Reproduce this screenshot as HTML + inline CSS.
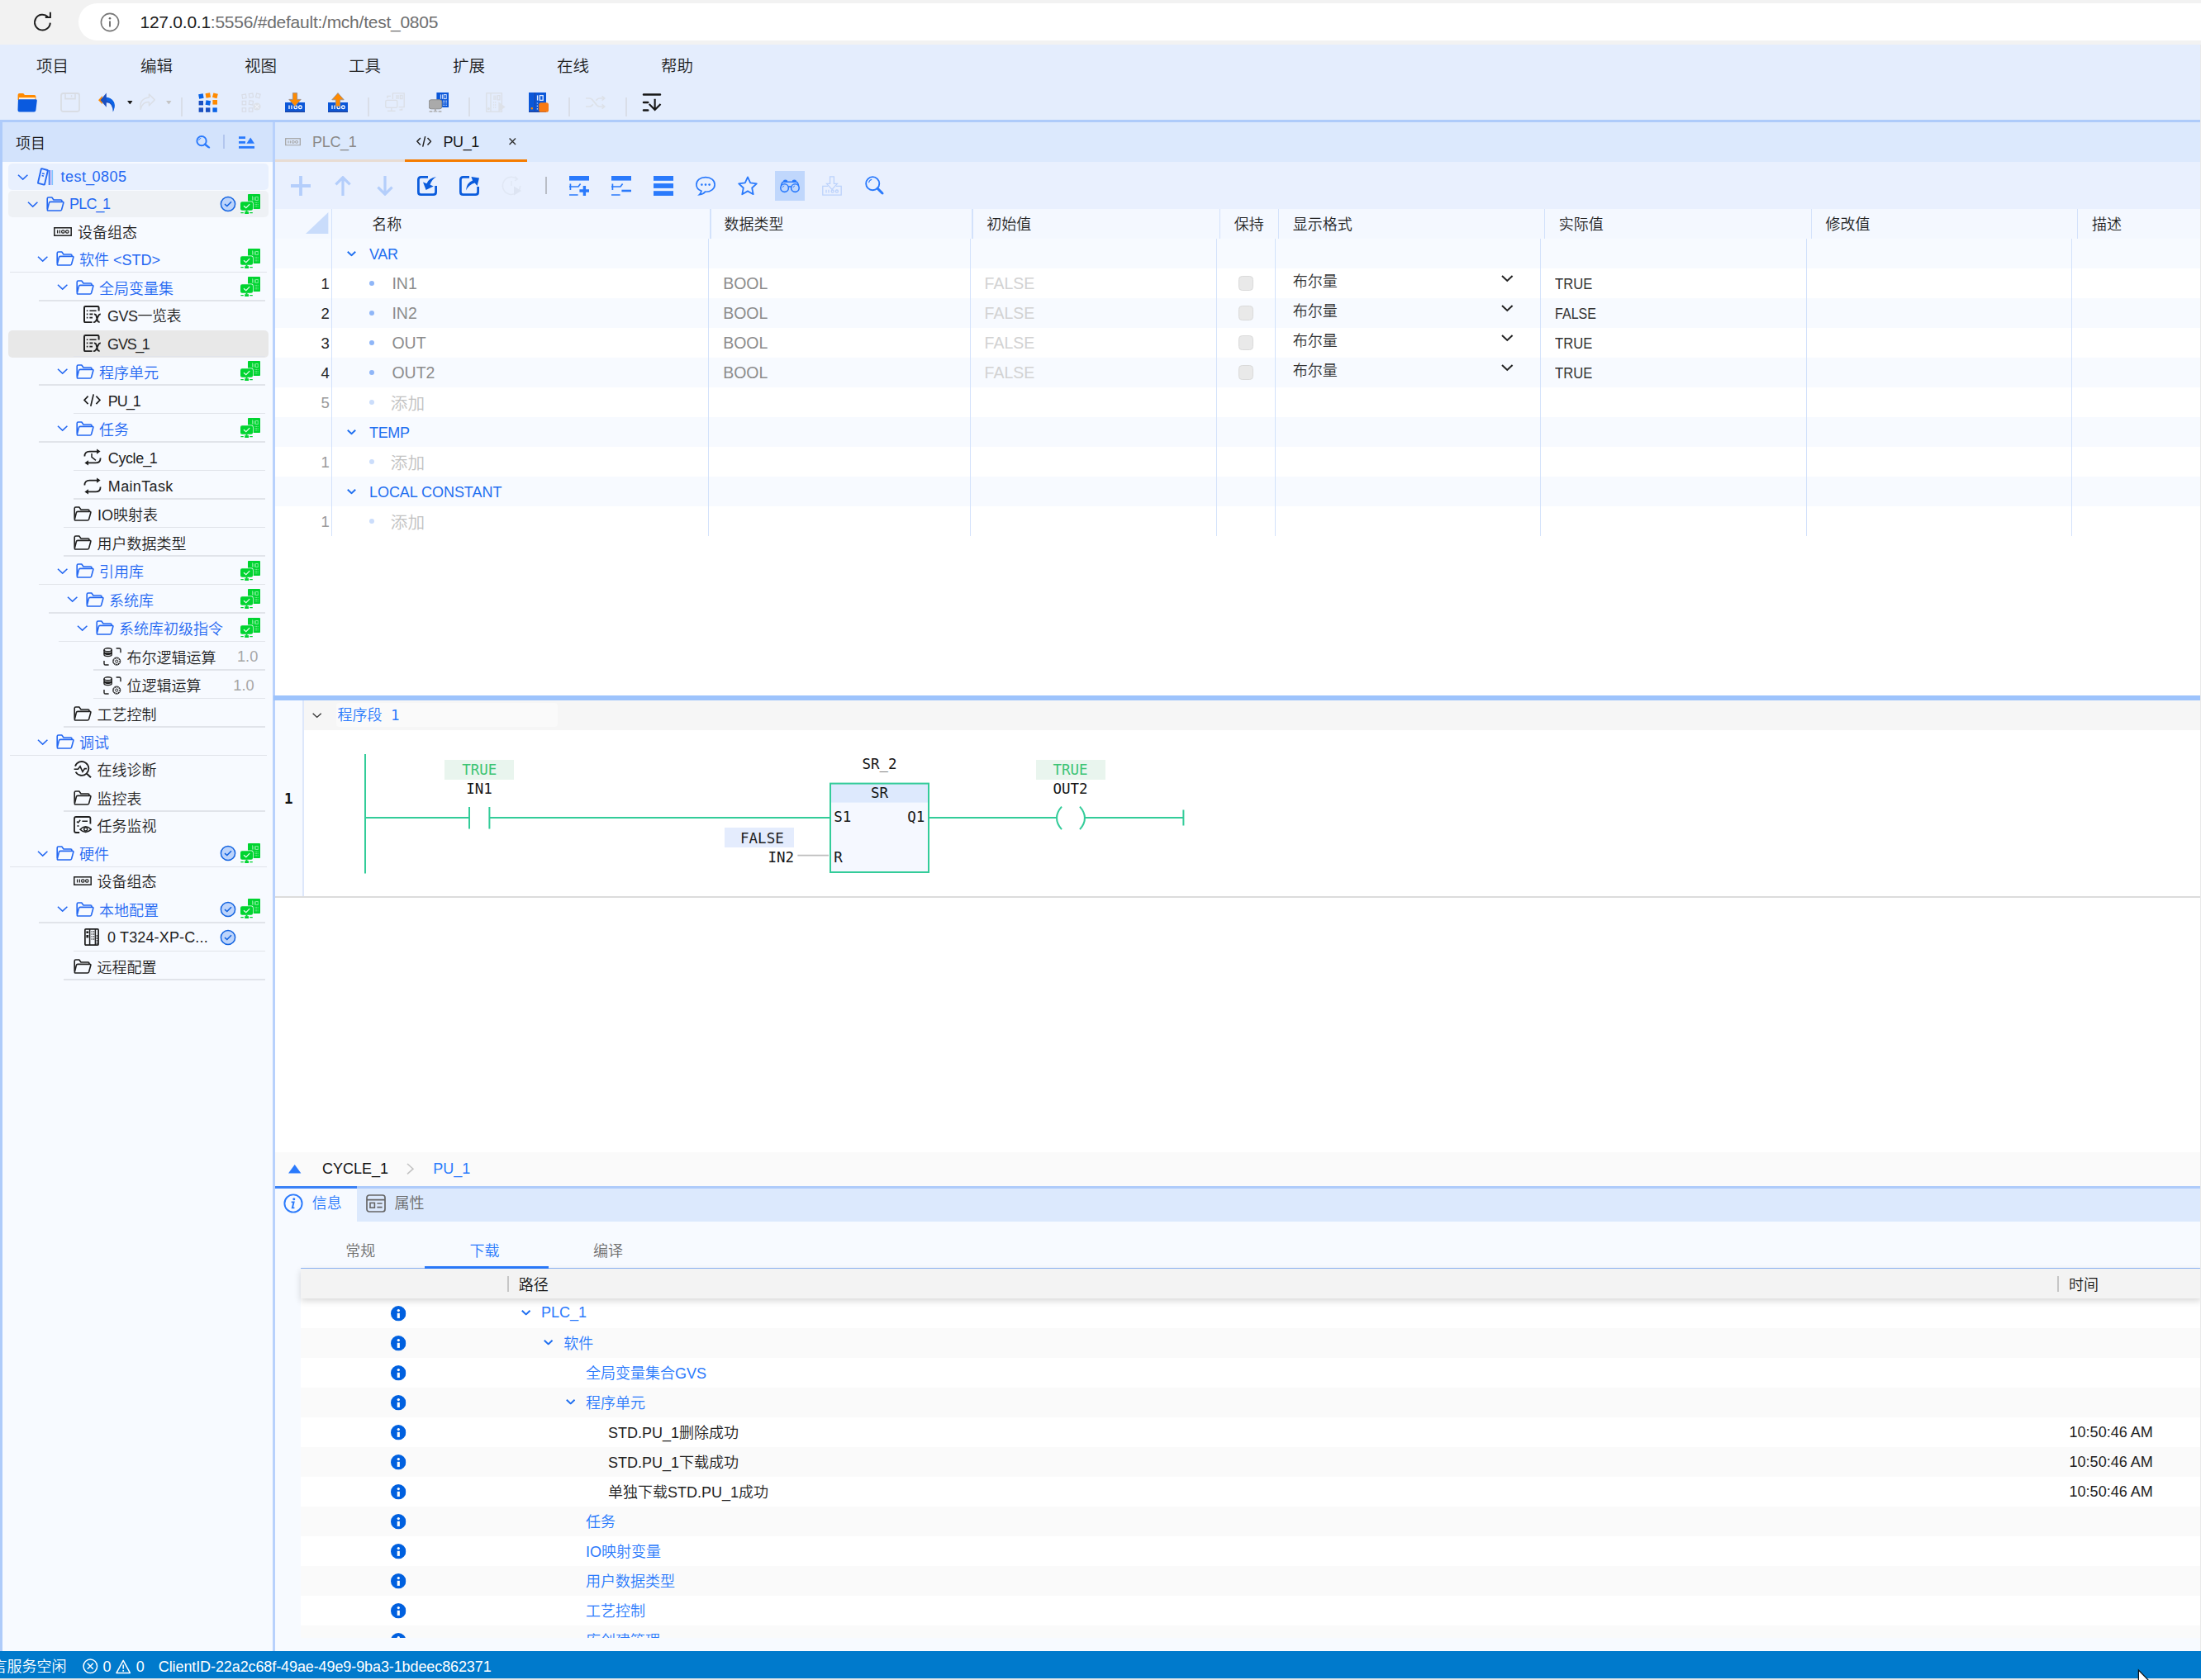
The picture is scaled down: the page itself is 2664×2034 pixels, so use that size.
<!DOCTYPE html>
<html lang="zh-CN"><head><meta charset="utf-8"><title>test_0805</title><style>
*{box-sizing:border-box;margin:0;padding:0}
html,body{width:2664px;height:2034px;overflow:hidden;background:#fff}
body{position:relative;font-family:"Liberation Sans","Noto Sans CJK SC",sans-serif;font-size:18px;font-weight:350;color:#222;-webkit-font-smoothing:antialiased}
.a{position:absolute}
.t{position:absolute;white-space:nowrap;line-height:1}
.mono{font-family:"DejaVu Sans Mono","Liberation Mono",monospace}
.blue{color:#2468f2}
svg{position:absolute;overflow:visible}
.u{letter-spacing:-2.4px;margin-left:-0.6px}
</style></head><body>
<svg width="0" height="0" style="position:absolute">
<defs>
<symbol id="chev" viewBox="0 0 14 8"><path d="M0.8 0.8 L7 6.6 L13.2 0.8" fill="none" stroke="currentColor" stroke-width="1.7"/></symbol>
<symbol id="chevb" viewBox="0 0 14 8"><path d="M1 1 L7 6.6 L13 1" fill="none" stroke="currentColor" stroke-width="2.5"/></symbol>
<symbol id="folder" viewBox="0 0 22 18"><path d="M1.2 15.2 V2.6 Q1.2 1 2.8 1 H6.8 L9 4 H17.6 Q19 4 19 5.6 V6.4 M5 6.4 H19.8 Q21.2 6.4 20.8 7.8 L18.6 15.8 Q18.2 17 17 17 H2.6 Q1 17 1.4 15.6 L3.4 7.6 Q3.7 6.4 5 6.4 Z" fill="none" stroke="currentColor" stroke-width="1.6" stroke-linejoin="round"/></symbol>
<symbol id="proj" viewBox="0 0 20 22"><path d="M5.6 1.2 L12.4 3 Q13 3.2 12.8 3.9 L9 20.2 Q8.8 20.8 8.1 20.6 L1.4 18.8 Q0.8 18.6 1 18 L4.8 1.7 Q5 1.1 5.6 1.2 Z" fill="none" stroke="currentColor" stroke-width="1.9"/><path d="M6 7 L8.8 7.6 M5.6 9.6 L8 10.2" stroke="currentColor" stroke-width="1.5"/><path d="M14.6 3 V21" stroke="currentColor" stroke-width="1.6"/><path d="M16.8 3 V21" stroke="#b9a8f5" stroke-width="1.3"/><path d="M18.4 3 V21" stroke="#7cc4ff" stroke-width="1.4"/></symbol>
<symbol id="dev" viewBox="0 0 22 11"><rect x="0.8" y="0.8" width="20.4" height="9.4" fill="none" stroke="currentColor" stroke-width="1.5"/><path d="M4.6 3.6 V7.4 M7.4 3.6 V7.4" stroke="currentColor" stroke-width="1.3"/><rect x="9.6" y="3.9" width="3.4" height="3.2" rx="1.4" fill="none" stroke="currentColor" stroke-width="1.2"/><rect x="14.6" y="3.9" width="3.4" height="3.2" rx="1.4" fill="none" stroke="currentColor" stroke-width="1.2"/></symbol>
<symbol id="gvs" viewBox="0 0 22 21"><path d="M18.6 6.4 V2.4 Q18.6 1 17.2 1 H2.4 Q1 1 1 2.4 V18.8 Q1 20.2 2.4 20.2 H10.6" fill="none" stroke="currentColor" stroke-width="2"/><path d="M3.8 6.2 H5.4 M7.4 6.2 H15.6 M3.8 10.4 H5.4 M7.4 10.4 H11.4 M3.8 14.6 H5.4 M7.4 14.6 H11" stroke="currentColor" stroke-width="1.6"/><path d="M13 10.6 Q15 10.2 15.6 12.4 L17 18 Q17.6 20.2 19.6 19.6 M20.8 10.6 Q19 10.2 18 12.6 L15.2 18.4 Q14.2 20.4 12.2 19.8" fill="none" stroke="currentColor" stroke-width="1.9"/></symbol>
<symbol id="code" viewBox="0 0 21 15"><path d="M5.6 2.6 L1 7.4 L5.6 12.2 M15.4 2.6 L20 7.4 L15.4 12.2 M12.2 0.4 L8.8 14.8" fill="none" stroke="currentColor" stroke-width="1.7"/></symbol>
<symbol id="loop" viewBox="0 0 22 21"><path d="M1.4 9.6 Q1.4 3.6 7.4 3.6 H19" fill="none" stroke="currentColor" stroke-width="1.8"/><path d="M16 0.4 L20.6 3.6 L16 6.8 Z" fill="currentColor"/><path d="M20.6 11.4 Q20.6 17.4 14.6 17.4 H3" fill="none" stroke="currentColor" stroke-width="1.8"/><path d="M6 14.2 L1.4 17.4 L6 20.6 Z" fill="currentColor"/></symbol>
<symbol id="cycle" viewBox="0 0 22 21"><path d="M1.4 9.6 Q1.4 3.6 7.4 3.6 H19" fill="none" stroke="currentColor" stroke-width="1.8"/><path d="M16 0.4 L20.6 3.6 L16 6.8 Z" fill="currentColor"/><path d="M20.6 11.4 Q20.6 17.4 14.6 17.4 H3" fill="none" stroke="currentColor" stroke-width="1.8"/><path d="M6 14.2 L1.4 17.4 L6 20.6 Z" fill="currentColor"/><path d="M10 6 V10.4 L15 14.4" fill="none" stroke="currentColor" stroke-width="1.5"/></symbol>
<symbol id="lib" viewBox="0 0 22 22"><ellipse cx="5.6" cy="2.8" rx="4.6" ry="2" fill="none" stroke="currentColor" stroke-width="1.4"/><path d="M1 2.8 V8.6 Q1 10.6 5.6 10.6 Q10.2 10.6 10.2 8.6 V2.8 M1 5 Q1 7 5.6 7 Q10.2 7 10.2 5" fill="none" stroke="currentColor" stroke-width="1.4"/><path d="M1 6.6 Q5.6 9.6 10.2 6.6" fill="none" stroke="currentColor" stroke-width="2.2"/><path d="M15.6 1 H19.4 Q21 1 21 2.6 V6.2 M1 16 V19.4 Q1 21 2.6 21 H6.6" fill="none" stroke="currentColor" stroke-width="1.4"/><circle cx="16.2" cy="16.6" r="3.8" fill="none" stroke="currentColor" stroke-width="1.1" stroke-dasharray="1.6 0.9"/><circle cx="16.2" cy="16.6" r="4.6" fill="none" stroke="currentColor" stroke-width="0.9"/><circle cx="16.2" cy="16.6" r="1.6" fill="none" stroke="currentColor" stroke-width="1"/></symbol>
<symbol id="diag" viewBox="0 0 22 21"><path d="M2 6.6 A8.4 8.4 0 1 1 2.6 13.6" fill="none" stroke="currentColor" stroke-width="1.8"/><path d="M0.6 10.2 H5.4 L8 6.8 L11 13.4 L13.4 9.6 H16" fill="none" stroke="currentColor" stroke-width="1.6"/><path d="M15.8 15.4 L21 20.2" stroke="currentColor" stroke-width="2"/></symbol>
<symbol id="taskmon" viewBox="0 0 22 21"><path d="M7.2 20 H3 Q1 20 1 18 V3 Q1 1 3 1 H18.4 Q20.4 1 20.4 3 V9.6" fill="none" stroke="currentColor" stroke-width="1.8"/><path d="M4 6.6 L5.6 8 L8.2 4.8 M10.4 6.2 H17 M4.4 12 H6.6" fill="none" stroke="currentColor" stroke-width="1.5"/><path d="M8 16.2 Q14.6 9.4 21.4 16.2 Q14.6 22.6 8 16.2 Z" fill="none" stroke="currentColor" stroke-width="1.6"/><circle cx="14.7" cy="16" r="2" fill="none" stroke="currentColor" stroke-width="1.5"/></symbol>
<symbol id="module" viewBox="0 0 18 21"><rect x="0.9" y="0.9" width="16.2" height="19.2" rx="1" fill="none" stroke="currentColor" stroke-width="1.7"/><path d="M6.6 1 V20 M13.4 1 V20" stroke="currentColor" stroke-width="1.5"/><rect x="2.4" y="3.4" width="2.8" height="2.6" fill="currentColor"/><rect x="2.4" y="8" width="2.8" height="3.4" fill="currentColor"/><path d="M8.6 4 H9.8 M11 4 H12.2 M8.6 7 H9.8 M11 7 H12.2 M8.6 10 H9.8 M11 10 H12.2 M8.6 13 H9.8 M11 13 H12.2 M14.6 9 H16 M14.6 12 H16 M14.6 15 H16 M14.6 18 H16" stroke="currentColor" stroke-width="1.6"/></symbol>
<symbol id="okc" viewBox="0 0 20 20"><circle cx="10" cy="10" r="8.6" fill="#bdd4fb" stroke="#1162e0" stroke-width="1.5"/><path d="M6 10.2 L8.8 12.5 L14 7.2" fill="none" stroke="#1162e0" stroke-width="1.6"/></symbol>
<symbol id="gplc" viewBox="0 0 24 24"><rect x="9" y="0" width="15" height="18" rx="0.8" fill="#00d430"/><path d="M14.6 2.4 V7.6 M16.6 3.4 V7.6" stroke="#9af0ad" stroke-width="0.9"/><rect x="18.6" y="3.4" width="2.6" height="4.2" fill="none" stroke="#9af0ad" stroke-width="0.8"/><path d="M17.6 10.4 H21.6 M17.6 12.6 H21.6 M17.6 14.8 H21.6" stroke="#9af0ad" stroke-width="0.9" stroke-dasharray="1 0.6"/><rect x="-0.7" y="8.5" width="16.4" height="12" rx="2.4" fill="#f2f4f8"/><rect x="0" y="9.2" width="15" height="10.6" rx="2" fill="#00d430"/><path d="M4 14.2 L6.8 16.6 L11.2 12.2" fill="none" stroke="#e8fff0" stroke-width="1.2"/><rect x="6.5" y="19.6" width="2" height="2" fill="#00d430"/><rect x="5.2" y="21.2" width="4.8" height="2.8" fill="#00d430"/><path d="M0.4 22.6 H3.8 M11.2 22.6 H14.8" stroke="#00d430" stroke-width="1.2"/></symbol>

<symbol id="tbfolder" viewBox="0 0 24 24"><path d="M0.6 3 Q0.6 1 2.6 1 H6.4 Q7.6 1 8.2 2 L8.8 3 H20.6 Q22.4 3 22.4 4.8 V9 H0.6 Z" fill="#ff8a00"/><path d="M2 6.2 H21.6 V10 H2 Z" fill="#fff6e8"/><path d="M2.2 8.2 H22.4 Q24 8.2 23.8 9.8 L22.4 21.4 Q22.2 23.4 20.2 23.4 H2.6 Q0.4 23.4 0.5 21.2 L0.9 9.6 Q1 8.2 2.2 8.2 Z" fill="#0a5adf"/></symbol>
<symbol id="tbsave" viewBox="0 0 24 24"><rect x="1" y="1" width="22" height="22" rx="2.4" fill="none" stroke="#d9dde4" stroke-width="1.8"/><path d="M6 1 V7.6 H18 V1" fill="none" stroke="#d9dde4" stroke-width="1.6"/><path d="M13.6 3.2 V5.4" stroke="#d9dde4" stroke-width="1.4"/></symbol>
<symbol id="tbundo" viewBox="0 0 24 24"><path d="M0 9 L5 3.6 V14.4 Z" fill="#ff8a00"/><path d="M10.2 0 L2.6 9 L10.2 18 V12.4 Q17.6 11.6 18.6 24 Q25 8.6 10.2 5.6 Z" fill="#1a4fc0"/><path d="M10.2 5.6 Q25 8.6 18.6 24 Q20 12 10.2 9.4 Z" fill="#0a63e6"/></symbol>
<symbol id="tbredo" viewBox="0 0 24 24"><path d="M13.6 1 L21 8.6 L13.6 16.2 V11.6 Q5 11 2.4 21 Q0 7 13.6 5.4 Z" fill="none" stroke="#dbdfe6" stroke-width="1.6" stroke-linejoin="round"/></symbol>
<symbol id="caret" viewBox="0 0 7 5"><path d="M0 0 H7 L3.5 5 Z" fill="currentColor"/></symbol>
<symbol id="tbgrid" viewBox="0 0 24 24"><rect x="0.6" y="1.8" width="5.6" height="5.6" fill="#0a63e6" transform="rotate(-10 3.4 4.6)"/><rect x="9" y="0.8" width="5.6" height="5.6" fill="#ff8a00" transform="rotate(-10 11.8 3.6)"/><rect x="17.6" y="1" width="5.6" height="5.6" fill="#ff8a00" transform="rotate(14 20.4 3.8)"/><rect x="0.6" y="10" width="5.4" height="5.4" fill="#1a4fc0"/><rect x="9" y="9.6" width="5.6" height="5.6" fill="#0a63e6" transform="rotate(10 11.8 12.4)"/><rect x="17.4" y="9" width="5.6" height="5.6" fill="#ff8a00"/><rect x="0.6" y="18.4" width="5.4" height="5.4" fill="#1a4fc0"/><rect x="9" y="18.4" width="5.4" height="5.4" fill="#1a4fc0"/><rect x="17.4" y="18.4" width="5.4" height="5.4" fill="#0a63e6"/></symbol>
<symbol id="tbgridd" viewBox="0 0 24 24"><g fill="none" stroke="#d9dde6" stroke-width="1.2"><rect x="1.2" y="2.4" width="4.6" height="4.6" transform="rotate(-10 3.4 4.6)"/><rect x="9.6" y="1.4" width="4.6" height="4.6" transform="rotate(-10 11.8 3.6)"/><rect x="18" y="1.6" width="4.6" height="4.6" transform="rotate(14 20.4 3.8)"/><rect x="1.2" y="10.4" width="4.4" height="4.4"/><rect x="9.6" y="10" width="4.6" height="4.6" transform="rotate(10 11.8 12.4)"/><rect x="1.2" y="18.8" width="4.4" height="4.4"/><rect x="9.4" y="18.8" width="4.4" height="4.4"/></g><circle cx="19" cy="17" r="4.6" fill="#dde1e8"/><path d="M16.6 14.6 L21.4 19.4 M21.4 14.6 L16.6 19.4" stroke="#eef2fa" stroke-width="1.2"/></symbol>
<symbol id="tbbox" viewBox="0 0 24 12"><rect x="0" y="0" width="24" height="12" fill="#0b57d8"/><rect x="0" y="10.4" width="24" height="1.6" fill="#1d47a8"/><path d="M5 3.6 V8 M8 3.6 V8" stroke="#fff" stroke-width="1.3"/><rect x="11" y="4" width="3.6" height="3.6" rx="1.6" fill="none" stroke="#fff" stroke-width="1.3"/><rect x="16.6" y="4" width="3.6" height="3.6" rx="1.6" fill="none" stroke="#fff" stroke-width="1.3"/></symbol>
<symbol id="tbdown" viewBox="0 0 24 24"><use href="#tbbox" x="0" y="12" width="24" height="12"/><path d="M9.4 0.6 H14.6 V8.4 H19.2 L12 16.6 L4.8 8.4 H9.4 Z" fill="#ff8a00" stroke="#9a8f8a" stroke-width="0.9"/></symbol>
<symbol id="tbup" viewBox="0 0 24 24"><use href="#tbbox" x="0" y="12" width="24" height="12"/><path d="M9.4 16.6 H14.6 V8.8 H19.2 L12 0.6 L4.8 8.8 H9.4 Z" fill="#ff8a00" stroke="#9a8f8a" stroke-width="0.9"/></symbol>
<symbol id="tbmond" viewBox="0 0 24 24"><g fill="none" stroke="#dbdfe6" stroke-width="1.3"><path d="M9.4 8 V0.8 H23.2 V17.6 H16.6"/><path d="M14 3 V8 M16 3 V8 M18.4 3.4 H21 V7.6 H18.4 Z"/><rect x="0.8" y="9.4" width="14" height="9" rx="1.6"/><path d="M7.8 18.4 V22 M3 22.4 H12.6"/><path d="M3 7 V4.4 H7"/><path d="M17.4 21 H20.6 V19.4"/></g></symbol>
<symbol id="tbmon" viewBox="0 0 24 24"><rect x="9.4" y="0" width="14.6" height="18" fill="#0b57d8"/><path d="M14.4 2.4 V7.8 M16.4 2.4 V7.8" stroke="#dbe7ff" stroke-width="1"/><rect x="18.2" y="2.6" width="3" height="5" fill="none" stroke="#dbe7ff" stroke-width="1"/><path d="M17 10.4 H22 M17 12.8 H22 M17 15.2 H22" stroke="#dbe7ff" stroke-width="1.1" stroke-dasharray="1.2 0.7"/><rect x="0.2" y="8.8" width="15.6" height="11" rx="2.6" fill="#aaaaaa" stroke="#8c8c8c" stroke-width="1"/><rect x="6.9" y="19.6" width="2" height="2.6" fill="#aaa"/><path d="M0.6 23 H4.4 M5.6 22.8 H10.4 M11.6 23 H15.4" stroke="#aaa" stroke-width="1.3"/></symbol>
<symbol id="tbplayd" viewBox="0 0 24 24"><g fill="none" stroke="#dbdfe6" stroke-width="1.3"><rect x="0.8" y="0.8" width="18.6" height="22.4"/><path d="M6 1 V23 M10 3.4 V9 M12 3.4 V9 M14.4 3.6 H17 V8.8 H14.4 Z"/><circle cx="3.4" cy="19.6" r="0.9"/><path d="M9 12 H13 M9 15 H13 M9 18 H13" stroke-dasharray="1.1 0.8"/></g><path d="M15.4 11.2 L23.6 17.4 L15.4 23.6 Z" fill="#dde1e8"/></symbol>
<symbol id="tbplco" viewBox="0 0 24 24"><rect x="0" y="0" width="21" height="24" fill="#0b57d8"/><rect x="0" y="22.4" width="21" height="1.6" fill="#1d47a8"/><path d="M7.4 0 V24" stroke="#1d47a8" stroke-width="1.2"/><path d="M10.6 3.4 V9.6" stroke="#e6eeff" stroke-width="1.4"/><rect x="13.4" y="3.6" width="3.8" height="5.8" fill="none" stroke="#e6eeff" stroke-width="1.3"/><path d="M10.4 12.4 V21" stroke="#e6eeff" stroke-width="1.2" stroke-dasharray="1.2 2.2"/><rect x="2.6" y="18" width="2.4" height="2.6" rx="0.8" fill="#ff8a00"/><rect x="12.2" y="12.2" width="11.8" height="11.6" rx="2.6" fill="#f97a12"/></symbol>
<symbol id="tbshuf" viewBox="0 0 24 16"><g fill="none" stroke="#dde1e8" stroke-width="1.7"><path d="M0 3 H4.4 Q6.4 3 7.8 4.6 L13.4 11.4 Q14.8 13 16.8 13 H22.6"/><path d="M0 13 H4.4 Q6.4 13 7.8 11.4 L8.8 10.2 M12.4 5.8 L13.4 4.6 Q14.8 3 16.8 3 H22.6"/><path d="M19.6 0.4 L22.8 3 L19.6 5.6 M19.6 10.4 L22.8 13 L19.6 15.6"/></g></symbol>
<symbol id="tbsort" viewBox="0 0 24 24"><g fill="none" stroke="#161616" stroke-width="2.7" stroke-linecap="round"><path d="M1.6 2.6 H22.4 M1.6 12.6 H7 M1.6 22.4 H7"/></g><path d="M15.8 8 V21.4 M8.6 14.6 L15.8 21.8 L23 14.6" fill="none" stroke="#161616" stroke-width="2.2"/></symbol>

<symbol id="t2plus" viewBox="0 0 24 24"><path d="M12 0 V24 M0 12 H24" stroke="#b4cefb" stroke-width="3.8"/></symbol>
<symbol id="t2up" viewBox="0 0 20 24"><path d="M10 2 V24 M1.4 10.4 L10 1.8 L18.6 10.4" fill="none" stroke="#b4cefb" stroke-width="3.2"/></symbol>
<symbol id="t2down" viewBox="0 0 20 24"><path d="M10 0 V22 M1.4 13.6 L10 22.2 L18.6 13.6" fill="none" stroke="#b4cefb" stroke-width="3.2"/></symbol>
<symbol id="t2imp" viewBox="0 0 24 24"><path d="M13 1.4 H4.6 Q1.4 1.4 1.4 4.6 V19.4 Q1.4 22.6 4.6 22.6 H19.4 Q22.6 22.6 22.6 19.4 V12" fill="none" stroke="#0b5cdc" stroke-width="2.8"/><path d="M23 1 Q13.6 3 11.4 9.2 L7 7.6 L10.6 17 L19.8 12.6 L15.6 10.8 Q16.8 5 23 1 Z" fill="#0b5cdc"/></symbol>
<symbol id="t2exp" viewBox="0 0 24 24"><path d="M12 1.4 H4.6 Q1.4 1.4 1.4 4.6 V19.4 Q1.4 22.6 4.6 22.6 H19.4 Q22.6 22.6 22.6 19.4 V13" fill="none" stroke="#0b5cdc" stroke-width="2.8"/><path d="M8 17.4 Q9 8 16 5.6 L14.4 1 L24 2.4 L21.6 12 L18.6 8.6 Q11.6 10.6 8 17.4 Z" fill="#0b5cdc"/></symbol>
<symbol id="t2clk" viewBox="0 0 24 24"><path d="M18.6 3.6 A10.6 10.6 0 1 0 22.6 12" fill="none" stroke="#e0e7f4" stroke-width="1.6"/><path d="M16.4 0.8 L19.4 3.8 L16 5.8 M12 6 V12" fill="none" stroke="#e0e7f4" stroke-width="1.4"/><path d="M15 12.6 L24 18 L15 23.6 Z" fill="#dde4f2"/></symbol>
<symbol id="t2addr" viewBox="0 0 24 24"><rect x="0" y="0" width="24" height="5.6" fill="#2a7afc"/><path d="M1.4 9.4 V17 M0 13 H11 L13.6 9.6 M0 23 H10.6" fill="none" stroke="#2a7afc" stroke-width="1.7"/><path d="M18.4 12 V24 M12.4 18 H24.4" stroke="#2a7afc" stroke-width="3.4"/></symbol>
<symbol id="t2delr" viewBox="0 0 24 24"><rect x="0" y="0" width="24" height="5.6" fill="#2a7afc"/><path d="M1.4 9.4 V17 M0 13 H11 L13.6 9.6 M0 23 H10.6" fill="none" stroke="#2a7afc" stroke-width="1.7"/><path d="M12.4 18 H24.4" stroke="#2a7afc" stroke-width="2.6"/></symbol>
<symbol id="t2rows" viewBox="0 0 24 24"><rect x="0" y="0" width="24" height="5.8" fill="#2a7afc"/><rect x="0" y="9.1" width="24" height="5.8" fill="#2a7afc"/><rect x="0" y="18.2" width="24" height="5.8" fill="#2a7afc"/></symbol>
<symbol id="t2cmt" viewBox="0 0 24 24"><path d="M12 1.6 C5.4 1.6 0.9 5.6 0.9 10.4 C0.9 14 3.4 16.8 7 18.2 Q6.6 20.8 4.6 22.6 Q9.4 22 11.4 19.2 C18.4 19.6 23.1 15.4 23.1 10.4 C23.1 5.6 18.6 1.6 12 1.6 Z" fill="none" stroke="#2a7afc" stroke-width="1.7"/><circle cx="7.4" cy="10.6" r="1.3" fill="#2a7afc"/><circle cx="12" cy="10.6" r="1.3" fill="#2a7afc"/><circle cx="16.6" cy="10.6" r="1.3" fill="#2a7afc"/></symbol>
<symbol id="t2star" viewBox="0 0 24 24"><path d="M12 1.4 L15.2 8.4 L22.8 9.3 L17.2 14.5 L18.7 22.2 L12 18.4 L5.3 22.2 L6.8 14.5 L1.2 9.3 L8.8 8.4 Z" fill="none" stroke="#2a7afc" stroke-width="1.8" stroke-linejoin="round"/></symbol>
<symbol id="t2bino" viewBox="0 0 24 24"><circle cx="5.6" cy="14.6" r="4.8" fill="none" stroke="#2a7afc" stroke-width="1.6"/><circle cx="18.4" cy="14.6" r="4.8" fill="none" stroke="#2a7afc" stroke-width="1.6"/><path d="M1.4 12 Q2.4 7.2 4.4 7.2 H19.6 Q21.6 7.2 22.6 12 M10.2 13.4 Q12 12 13.8 13.4" fill="none" stroke="#2a7afc" stroke-width="1.6"/><path d="M4 7 Q4 4.6 6.6 4.6 Q9.2 4.6 9.2 7 M14.8 7 Q14.8 4.6 17.4 4.6 Q20 4.6 20 7 Z" fill="#2a7afc"/><path d="M3.2 14 Q3.6 12.4 5.2 12 M16 14 Q16.4 12.4 18 12" fill="none" stroke="#2a7afc" stroke-width="0.9"/></symbol>
<symbol id="t2dld" viewBox="0 0 24 24"><g fill="none" stroke="#bcd2fb" stroke-width="1.3"><path d="M9.6 0.8 H14.4 V9.4 H18.4 L12 16.4 L5.6 9.4 H9.6 Z"/><path d="M7 12.4 H0.8 V23.2 H23.2 V12.4 H17"/><path d="M5 16.8 V20.4 M8 16.8 V20.4"/><rect x="11.2" y="17" width="3" height="3.2" rx="1.4"/><rect x="16.4" y="17" width="3" height="3.2" rx="1.4"/></g></symbol>
<symbol id="t2srch" viewBox="0 0 23 23"><circle cx="9.4" cy="9.4" r="8.2" fill="none" stroke="#2a7afc" stroke-width="1.9"/><path d="M15.4 15.4 L21.6 21.6" stroke="#2a7afc" stroke-width="3" stroke-linecap="round"/><path d="M4.6 8.4 Q5.2 5.2 8.4 4.4" fill="none" stroke="#2a7afc" stroke-width="1.1"/></symbol>

<symbol id="phsrch" viewBox="0 0 18 16"><circle cx="7.2" cy="6.8" r="5.8" fill="none" stroke="#2a7afc" stroke-width="2"/><path d="M11.4 11 L16.4 15" stroke="#2a7afc" stroke-width="2.6" stroke-linecap="round"/><path d="M3.6 6 Q4.2 3.8 6.4 3.4" fill="none" stroke="#2a7afc" stroke-width="1"/></symbol>
<symbol id="phcol" viewBox="0 0 19 15"><path d="M0 1.6 H8 M0 7.4 H8 M0 13.4 H19" stroke="#2a7afc" stroke-width="2.6"/><path d="M9.4 8.8 L14.2 1.4 L19 8.8 Z" fill="#2a7afc"/></symbol>
<symbol id="reload" viewBox="0 0 26 26"><path d="M21.8 13.6 A9.4 9.4 0 1 1 18.8 6.2" fill="none" stroke="#1f1f1f" stroke-width="2"/><path d="M15.8 6.9 H21.9 V0.8" fill="none" stroke="#1f1f1f" stroke-width="2"/></symbol>
<symbol id="binfo" viewBox="0 0 24 24"><circle cx="12" cy="12" r="10.6" fill="none" stroke="#777" stroke-width="1.6"/><circle cx="12" cy="7.2" r="1.3" fill="#666"/><path d="M12 10.4 V17.4" stroke="#666" stroke-width="1.8"/></symbol>
<symbol id="infos" viewBox="0 0 18.4 18.4"><circle cx="9.2" cy="9.2" r="9.2" fill="#0060df"/><circle cx="9.3" cy="5.6" r="1.65" fill="#fff"/><rect x="7.75" y="8.8" width="3.1" height="6.1" fill="#fff"/></symbol>
<symbol id="infoo" viewBox="0 0 24 24"><circle cx="12" cy="12" r="10.6" fill="none" stroke="#2a7afc" stroke-width="1.9"/><circle cx="12.8" cy="6.8" r="1.5" fill="#2a7afc"/><path d="M9.6 10.4 H12.6 L10.8 17.4 H13.4" fill="none" stroke="#2a7afc" stroke-width="1.9"/></symbol>
<symbol id="prop" viewBox="0 0 24 22"><rect x="1" y="1" width="22" height="20" rx="3" fill="none" stroke="#666" stroke-width="1.7"/><path d="M1 6.6 H23 M13.4 11 H19.6 M13.4 15.6 H19.6" stroke="#666" stroke-width="1.7"/><rect x="5" y="10.4" width="5.4" height="5.8" fill="none" stroke="#666" stroke-width="1.6"/></symbol>
</defs></svg>
<div class="a" style="left:0px;top:0px;width:2664px;height:54px;background:#f2f2f2;"></div>
<div class="a" style="left:95px;top:4px;width:2600px;height:45px;background:#fff;border-radius:22.5px;"></div>
<svg class="a" style="left:39px;top:13.5px;" width="26" height="26"><use href="#reload"/></svg>
<svg class="a" style="left:121px;top:14.5px;" width="24" height="24"><use href="#binfo"/></svg>
<div class="t " style="top:16.34px;font-size:21px;left:169.5px;color:#6e6e6e;letter-spacing:-0.25px;"><span style="color:#1b1b1b">127.0.0.1</span>:5556/#default:/mch/test_0805</div>
<div class="a" style="left:0px;top:54px;width:2664px;height:91px;background:#e4edfd;"></div>
<div class="t " style="top:70.7px;font-size:19.5px;left:44px;color:#1f1f1f;">项目</div>
<div class="t " style="top:70.7px;font-size:19.5px;left:170px;color:#1f1f1f;">编辑</div>
<div class="t " style="top:70.7px;font-size:19.5px;left:296px;color:#1f1f1f;">视图</div>
<div class="t " style="top:70.7px;font-size:19.5px;left:422px;color:#1f1f1f;">工具</div>
<div class="t " style="top:70.7px;font-size:19.5px;left:548px;color:#1f1f1f;">扩展</div>
<div class="t " style="top:70.7px;font-size:19.5px;left:674px;color:#1f1f1f;">在线</div>
<div class="t " style="top:70.7px;font-size:19.5px;left:800px;color:#1f1f1f;">帮助</div>
<svg class="a" style="left:21px;top:112px;" width="24" height="24"><use href="#tbfolder"/></svg>
<svg class="a" style="left:73px;top:112px;" width="24" height="24"><use href="#tbsave"/></svg>
<svg class="a" style="left:119px;top:111.5px;" width="23" height="24"><use href="#tbundo"/></svg>
<svg class="a" style="left:153.6px;top:121.6px;color:#1a1a1a;" width="6.6" height="4.6"><use href="#caret"/></svg>
<svg class="a" style="left:168px;top:113px;" width="22" height="22"><use href="#tbredo"/></svg>
<svg class="a" style="left:201.4px;top:121.6px;color:#c4c4c4;" width="6.6" height="4.6"><use href="#caret"/></svg>
<div class="a" style="left:218.5px;top:118px;width:2px;height:23px;background:#d9dee8;"></div>
<svg class="a" style="left:240px;top:112px;" width="24" height="24"><use href="#tbgrid"/></svg>
<svg class="a" style="left:292px;top:112px;" width="24" height="24"><use href="#tbgridd"/></svg>
<svg class="a" style="left:345px;top:112px;" width="24" height="24"><use href="#tbdown"/></svg>
<svg class="a" style="left:397px;top:112px;" width="24" height="24"><use href="#tbup"/></svg>
<div class="a" style="left:445px;top:118px;width:2px;height:23px;background:#d9dee8;"></div>
<svg class="a" style="left:466px;top:112px;" width="24" height="24"><use href="#tbmond"/></svg>
<svg class="a" style="left:519px;top:112px;" width="24" height="24"><use href="#tbmon"/></svg>
<div class="a" style="left:566.5px;top:118px;width:2px;height:23px;background:#d9dee8;"></div>
<svg class="a" style="left:588px;top:112px;" width="24" height="24"><use href="#tbplayd"/></svg>
<svg class="a" style="left:640px;top:112px;" width="24" height="24"><use href="#tbplco"/></svg>
<div class="a" style="left:688px;top:118px;width:2px;height:23px;background:#d9dee8;"></div>
<svg class="a" style="left:709px;top:116px;" width="24" height="16"><use href="#tbshuf"/></svg>
<div class="a" style="left:757px;top:118px;width:2px;height:23px;background:#d9dee8;"></div>
<svg class="a" style="left:776.6px;top:112px;" width="24" height="23"><use href="#tbsort"/></svg>
<div class="a" style="left:0px;top:145px;width:2664px;height:3px;background:#aecbfa;"></div>
<div class="a" style="left:0px;top:148px;width:3.6px;height:1851px;background:#aecbfa;"></div>
<div class="a" style="left:329.6px;top:148px;width:3.2px;height:1851px;background:#b8d1fc;"></div>
<div class="a" style="left:3px;top:148px;width:327px;height:1851px;background:#f7faff;"></div>
<div class="a" style="left:3px;top:148px;width:327px;height:48px;background:#d3e3fc;"></div>
<div class="t " style="top:164.6px;font-size:18px;left:19px;color:#1a1a1a;">项目</div>
<svg class="a" style="left:237px;top:163.6px;" width="17.6" height="15.6"><use href="#phsrch"/></svg>
<div class="a" style="left:270px;top:163px;width:1.5px;height:16.5px;background:#b3c6ee;"></div>
<svg class="a" style="left:288.8px;top:164.6px;" width="19" height="15"><use href="#phcol"/></svg>
<div class="a" style="left:10.2px;top:198.2px;width:314.8px;height:31.5px;background:#e8f0fe;border-radius:5px;"></div>
<svg class="a" style="left:21px;top:210.6px;color:#2468f2;" width="13.4" height="7.4"><use href="#chev"/></svg>
<svg class="a" style="left:45px;top:202.6px;color:#2468f2;" width="20" height="22"><use href="#proj"/></svg>
<div class="t " style="top:205.31px;font-size:18px;left:73.5px;color:#2468f2;letter-spacing:0.5px;">test<span class="u">_</span>0805</div>
<div class="a" style="left:10.2px;top:231.2px;width:314.8px;height:31.5px;background:#eef1f5;border-radius:5px;"></div>
<svg class="a" style="left:33px;top:243.6px;color:#2468f2;" width="13.4" height="7.4"><use href="#chev"/></svg>
<svg class="a" style="left:56px;top:237.6px;color:#2468f2;" width="22" height="18"><use href="#folder"/></svg>
<div class="t " style="top:238.31px;font-size:18px;left:84.0px;color:#2468f2;letter-spacing:-0.7px;">PLC<span class="u">_</span>1</div>
<svg class="a" style="left:266px;top:237.0px;" width="20" height="20"><use href="#okc"/></svg>
<svg class="a" style="left:291px;top:234.8px;" width="24" height="24"><use href="#gplc"/></svg>
<svg class="a" style="left:65px;top:274.7px;color:#1f1f1f;" width="22" height="11"><use href="#dev"/></svg>
<div class="t " style="top:273.4px;font-size:18px;left:93.9px;color:#1f1f1f;">设备组态</div>
<svg class="a" style="left:45px;top:309.6px;color:#2468f2;" width="13.4" height="7.4"><use href="#chev"/></svg>
<svg class="a" style="left:68px;top:304.0px;color:#2468f2;" width="22" height="18"><use href="#folder"/></svg>
<div class="t " style="top:306.2px;font-size:18px;left:96.10000000000001px;color:#2468f2;">软件 &lt;STD&gt;</div>
<svg class="a" style="left:291px;top:300.8px;" width="24" height="24"><use href="#gplc"/></svg>
<div class="a" style="left:12px;top:328.7px;width:311px;height:1.5px;background:#e1e4ea;"></div>
<svg class="a" style="left:69px;top:344.1px;color:#2468f2;" width="13.4" height="7.4"><use href="#chev"/></svg>
<svg class="a" style="left:92px;top:338.5px;color:#2468f2;" width="22" height="18"><use href="#folder"/></svg>
<div class="t " style="top:340.7px;font-size:18px;left:120.10000000000001px;color:#2468f2;">全局变量集</div>
<svg class="a" style="left:291px;top:335.3px;" width="24" height="24"><use href="#gplc"/></svg>
<div class="a" style="left:47px;top:363.2px;width:274px;height:1.5px;background:#e1e4ea;"></div>
<svg class="a" style="left:101px;top:370.4px;color:#1f1f1f;" width="22" height="21"><use href="#gvs"/></svg>
<div class="t " style="top:373.8px;font-size:18px;left:130px;color:#1f1f1f;letter-spacing:-0.5px;">GVS一览表</div>
<div class="a" style="left:10.2px;top:400.0px;width:314.8px;height:32.5px;background:#e8e8e8;border-radius:5px;"></div>
<svg class="a" style="left:101px;top:405.0px;color:#1f1f1f;" width="22" height="21"><use href="#gvs"/></svg>
<div class="t " style="top:407.61px;font-size:18px;left:130px;color:#1f1f1f;letter-spacing:-1.1px;">GVS<span class="u">_</span>1</div>
<div class="a" style="left:89px;top:430.7px;width:232px;height:1.5px;background:#e1e4ea;"></div>
<svg class="a" style="left:69px;top:446.1px;color:#2468f2;" width="13.4" height="7.4"><use href="#chev"/></svg>
<svg class="a" style="left:92px;top:440.5px;color:#2468f2;" width="22" height="18"><use href="#folder"/></svg>
<div class="t " style="top:442.7px;font-size:18px;left:120.10000000000001px;color:#2468f2;">程序单元</div>
<svg class="a" style="left:291px;top:437.3px;" width="24" height="24"><use href="#gplc"/></svg>
<div class="a" style="left:47px;top:465.2px;width:274px;height:1.5px;background:#e1e4ea;"></div>
<svg class="a" style="left:101px;top:477.0px;color:#1f1f1f;" width="21" height="15"><use href="#code"/></svg>
<div class="t " style="top:476.61px;font-size:18px;left:130.8px;color:#1f1f1f;letter-spacing:-1.1px;">PU<span class="u">_</span>1</div>
<div class="a" style="left:89px;top:499.7px;width:232px;height:1.5px;background:#e1e4ea;"></div>
<svg class="a" style="left:69px;top:515.1px;color:#2468f2;" width="13.4" height="7.4"><use href="#chev"/></svg>
<svg class="a" style="left:92px;top:509.5px;color:#2468f2;" width="22" height="18"><use href="#folder"/></svg>
<div class="t " style="top:511.7px;font-size:18px;left:120.10000000000001px;color:#2468f2;">任务</div>
<svg class="a" style="left:291px;top:506.3px;" width="24" height="24"><use href="#gplc"/></svg>
<div class="a" style="left:47px;top:534.2px;width:274px;height:1.5px;background:#e1e4ea;"></div>
<svg class="a" style="left:101px;top:543.0px;color:#1f1f1f;" width="22" height="21"><use href="#cycle"/></svg>
<div class="t " style="top:545.61px;font-size:18px;left:130.8px;color:#1f1f1f;letter-spacing:-0.4px;">Cycle<span class="u">_</span>1</div>
<div class="a" style="left:89px;top:568.7px;width:232px;height:1.5px;background:#e1e4ea;"></div>
<svg class="a" style="left:101px;top:577.5px;color:#1f1f1f;" width="22" height="21"><use href="#loop"/></svg>
<div class="t " style="top:580.11px;font-size:18px;left:130.8px;color:#1f1f1f;letter-spacing:0.35px;">MainTask</div>
<div class="a" style="left:89px;top:603.2px;width:232px;height:1.5px;background:#e1e4ea;"></div>
<svg class="a" style="left:89px;top:613.0px;color:#1f1f1f;" width="22" height="18"><use href="#folder"/></svg>
<div class="t " style="top:615.2px;font-size:18px;left:118px;color:#1f1f1f;">IO映射表</div>
<div class="a" style="left:77px;top:637.7px;width:244px;height:1.5px;background:#e1e4ea;"></div>
<svg class="a" style="left:89px;top:647.5px;color:#1f1f1f;" width="22" height="18"><use href="#folder"/></svg>
<div class="t " style="top:649.7px;font-size:18px;left:117.4px;color:#1f1f1f;">用户数据类型</div>
<div class="a" style="left:77px;top:672.2px;width:244px;height:1.5px;background:#e1e4ea;"></div>
<svg class="a" style="left:69px;top:687.6px;color:#2468f2;" width="13.4" height="7.4"><use href="#chev"/></svg>
<svg class="a" style="left:92px;top:682.0px;color:#2468f2;" width="22" height="18"><use href="#folder"/></svg>
<div class="t " style="top:684.2px;font-size:18px;left:120.10000000000001px;color:#2468f2;">引用库</div>
<svg class="a" style="left:291px;top:678.8px;" width="24" height="24"><use href="#gplc"/></svg>
<div class="a" style="left:47px;top:706.7px;width:274px;height:1.5px;background:#e1e4ea;"></div>
<svg class="a" style="left:81px;top:722.1px;color:#2468f2;" width="13.4" height="7.4"><use href="#chev"/></svg>
<svg class="a" style="left:104px;top:716.5px;color:#2468f2;" width="22" height="18"><use href="#folder"/></svg>
<div class="t " style="top:718.7px;font-size:18px;left:132.1px;color:#2468f2;">系统库</div>
<svg class="a" style="left:291px;top:713.3px;" width="24" height="24"><use href="#gplc"/></svg>
<div class="a" style="left:59px;top:741.2px;width:262px;height:1.5px;background:#e1e4ea;"></div>
<svg class="a" style="left:93px;top:756.6px;color:#2468f2;" width="13.4" height="7.4"><use href="#chev"/></svg>
<svg class="a" style="left:116px;top:751.0px;color:#2468f2;" width="22" height="18"><use href="#folder"/></svg>
<div class="t " style="top:753.2px;font-size:18px;left:144.1px;color:#2468f2;">系统库初级指令</div>
<svg class="a" style="left:291px;top:747.8px;" width="24" height="24"><use href="#gplc"/></svg>
<div class="a" style="left:71px;top:775.7px;width:250px;height:1.5px;background:#e1e4ea;"></div>
<svg class="a" style="left:124.5px;top:784.0px;color:#1f1f1f;" width="22" height="22"><use href="#lib"/></svg>
<div class="t " style="top:787.7px;font-size:18px;left:153.4px;color:#1f1f1f;">布尔逻辑运算</div>
<div class="t " style="top:786.21px;font-size:18.2px;left:287px;color:#a6a6a6;">1.0</div>
<div class="a" style="left:113px;top:810.2px;width:208px;height:1.5px;background:#e1e4ea;"></div>
<svg class="a" style="left:124.5px;top:818.5px;color:#1f1f1f;" width="22" height="22"><use href="#lib"/></svg>
<div class="t " style="top:822.2px;font-size:18px;left:153.4px;color:#1f1f1f;">位逻辑运算</div>
<div class="t " style="top:820.71px;font-size:18.2px;left:282.3px;color:#a6a6a6;">1.0</div>
<div class="a" style="left:113px;top:844.7px;width:208px;height:1.5px;background:#e1e4ea;"></div>
<svg class="a" style="left:89px;top:854.5px;color:#1f1f1f;" width="22" height="18"><use href="#folder"/></svg>
<div class="t " style="top:856.7px;font-size:18px;left:117.4px;color:#1f1f1f;">工艺控制</div>
<div class="a" style="left:77px;top:879.2px;width:244px;height:1.5px;background:#e1e4ea;"></div>
<svg class="a" style="left:45px;top:894.6px;color:#2468f2;" width="13.4" height="7.4"><use href="#chev"/></svg>
<svg class="a" style="left:68px;top:889.0px;color:#2468f2;" width="22" height="18"><use href="#folder"/></svg>
<div class="t " style="top:891.2px;font-size:18px;left:96.10000000000001px;color:#2468f2;">调试</div>
<div class="a" style="left:12px;top:913.7px;width:311px;height:1.5px;background:#e1e4ea;"></div>
<svg class="a" style="left:89px;top:920.9px;color:#1f1f1f;" width="22" height="21"><use href="#diag"/></svg>
<div class="t " style="top:924.3px;font-size:18px;left:117.4px;color:#1f1f1f;">在线诊断</div>
<svg class="a" style="left:89px;top:956.5px;color:#1f1f1f;" width="22" height="18"><use href="#folder"/></svg>
<div class="t " style="top:958.7px;font-size:18px;left:117.4px;color:#1f1f1f;">监控表</div>
<div class="a" style="left:77px;top:981.2px;width:244px;height:1.5px;background:#e1e4ea;"></div>
<svg class="a" style="left:89px;top:988.4px;color:#1f1f1f;" width="22" height="21"><use href="#taskmon"/></svg>
<div class="t " style="top:991.8px;font-size:18px;left:117.4px;color:#1f1f1f;">任务监视</div>
<svg class="a" style="left:45px;top:1029.6px;color:#2468f2;" width="13.4" height="7.4"><use href="#chev"/></svg>
<svg class="a" style="left:68px;top:1024.0px;color:#2468f2;" width="22" height="18"><use href="#folder"/></svg>
<div class="t " style="top:1026.2px;font-size:18px;left:96.10000000000001px;color:#2468f2;">硬件</div>
<svg class="a" style="left:266px;top:1023.0px;" width="20" height="20"><use href="#okc"/></svg>
<svg class="a" style="left:291px;top:1020.8px;" width="24" height="24"><use href="#gplc"/></svg>
<div class="a" style="left:12px;top:1048.7px;width:311px;height:1.5px;background:#e1e4ea;"></div>
<svg class="a" style="left:89px;top:1060.9px;color:#1f1f1f;" width="22" height="11"><use href="#dev"/></svg>
<div class="t " style="top:1059.3px;font-size:18px;left:117.4px;color:#1f1f1f;">设备组态</div>
<svg class="a" style="left:69px;top:1097.1px;color:#2468f2;" width="13.4" height="7.4"><use href="#chev"/></svg>
<svg class="a" style="left:92px;top:1091.5px;color:#2468f2;" width="22" height="18"><use href="#folder"/></svg>
<div class="t " style="top:1093.7px;font-size:18px;left:120.10000000000001px;color:#2468f2;">本地配置</div>
<svg class="a" style="left:266px;top:1090.5px;" width="20" height="20"><use href="#okc"/></svg>
<svg class="a" style="left:291px;top:1088.3px;" width="24" height="24"><use href="#gplc"/></svg>
<div class="a" style="left:47px;top:1116.2px;width:274px;height:1.5px;background:#e1e4ea;"></div>
<svg class="a" style="left:102px;top:1124.1px;color:#1f1f1f;" width="18" height="21"><use href="#module"/></svg>
<div class="t " style="top:1126.31px;font-size:18px;left:130px;color:#1f1f1f;letter-spacing:0.15px;">0 T324-XP-C...</div>
<svg class="a" style="left:266px;top:1125.0px;" width="20" height="20"><use href="#okc"/></svg>
<div class="a" style="left:89px;top:1150.7px;width:232px;height:1.5px;background:#e1e4ea;"></div>
<svg class="a" style="left:89px;top:1160.5px;color:#1f1f1f;" width="22" height="18"><use href="#folder"/></svg>
<div class="t " style="top:1162.7px;font-size:18px;left:117.4px;color:#1f1f1f;">远程配置</div>
<div class="a" style="left:77px;top:1185.2px;width:244px;height:1.5px;background:#e1e4ea;"></div>
<div class="a" style="left:333px;top:148px;width:2331px;height:48px;background:#dce9fd;"></div>
<div class="a" style="left:333px;top:193px;width:157px;height:3px;background:#e8dcd3;"></div>
<div class="a" style="left:490px;top:193px;width:148px;height:3px;background:#f57c00;"></div>
<svg class="a" style="left:345px;top:167.4px;color:#a6a6a6;" width="19" height="9.6"><use href="#dev"/></svg>
<div class="t " style="top:162.61px;font-size:18px;left:378px;color:#8a8a8a;letter-spacing:-0.3px;">PLC_1</div>
<svg class="a" style="left:503.6px;top:163.6px;color:#222;" width="18.4" height="14.6"><use href="#code"/></svg>
<div class="t " style="top:162.61px;font-size:18px;left:536.5px;color:#1a1a1a;letter-spacing:-0.4px;">PU_1</div>
<svg class="a" style="left:615.8px;top:166.6px" width="8.6" height="8.6" viewBox="0 0 9 9"><path d="M0.6 0.6 L8.4 8.4 M8.4 0.6 L0.6 8.4" stroke="#333" stroke-width="1.5"/></svg>
<div class="a" style="left:333px;top:196px;width:2331px;height:57px;background:#e9f0fe;"></div>
<div class="a" style="left:938px;top:207px;width:36px;height:36px;background:#c0d7fc;"></div>
<svg class="a" style="left:352px;top:213px;" width="24" height="24"><use href="#t2plus"/></svg>
<svg class="a" style="left:405px;top:213px;" width="20" height="24"><use href="#t2up"/></svg>
<svg class="a" style="left:456px;top:213px;" width="20" height="24"><use href="#t2down"/></svg>
<svg class="a" style="left:505px;top:213px;" width="24" height="24"><use href="#t2imp"/></svg>
<svg class="a" style="left:556px;top:213px;" width="24" height="24"><use href="#t2exp"/></svg>
<svg class="a" style="left:607px;top:213px;" width="24" height="24"><use href="#t2clk"/></svg>
<div class="a" style="left:660px;top:214px;width:1.5px;height:21px;background:#b9bdc6;"></div>
<svg class="a" style="left:689px;top:213px;" width="24" height="24"><use href="#t2addr"/></svg>
<svg class="a" style="left:740px;top:213px;" width="24" height="24"><use href="#t2delr"/></svg>
<svg class="a" style="left:791px;top:213px;" width="24" height="24"><use href="#t2rows"/></svg>
<svg class="a" style="left:842px;top:213px;" width="24" height="24"><use href="#t2cmt"/></svg>
<svg class="a" style="left:893px;top:213px;" width="24" height="24"><use href="#t2star"/></svg>
<svg class="a" style="left:944px;top:213px;" width="24" height="24"><use href="#t2bino"/></svg>
<svg class="a" style="left:995px;top:213px;" width="24" height="24"><use href="#t2dld"/></svg>
<svg class="a" style="left:1047px;top:213px;" width="22.6" height="22.6"><use href="#t2srch"/></svg>
<div class="a" style="left:333px;top:253px;width:2331px;height:36px;background:#f4f8ff;"></div>
<div class="a" style="left:333px;top:289px;width:2331px;height:36px;background:#f7faff;"></div>
<div class="a" style="left:333px;top:361px;width:2331px;height:36px;background:#f7faff;"></div>
<div class="a" style="left:333px;top:433px;width:2331px;height:36px;background:#f7faff;"></div>
<div class="a" style="left:333px;top:505px;width:2331px;height:36px;background:#f7faff;"></div>
<div class="a" style="left:333px;top:577px;width:2331px;height:36px;background:#f7faff;"></div>
<div class="a" style="left:401px;top:253px;width:1.3px;height:396px;background:#d3e2fb;"></div>
<div class="a" style="left:859.4px;top:253px;width:1.3px;height:36px;background:#d3e2fb;"></div>
<div class="a" style="left:856.9px;top:289px;width:1.3px;height:360px;background:#d3e2fb;"></div>
<div class="a" style="left:1176.4px;top:253px;width:1.3px;height:36px;background:#d3e2fb;"></div>
<div class="a" style="left:1173.8000000000002px;top:289px;width:1.3px;height:360px;background:#d3e2fb;"></div>
<div class="a" style="left:1475.8000000000002px;top:253px;width:1.3px;height:36px;background:#d3e2fb;"></div>
<div class="a" style="left:1471.8000000000002px;top:289px;width:1.3px;height:360px;background:#d3e2fb;"></div>
<div class="a" style="left:1546.7px;top:253px;width:1.3px;height:36px;background:#d3e2fb;"></div>
<div class="a" style="left:1542.8000000000002px;top:289px;width:1.3px;height:360px;background:#d3e2fb;"></div>
<div class="a" style="left:1868.8000000000002px;top:253px;width:1.3px;height:36px;background:#d3e2fb;"></div>
<div class="a" style="left:1863.6000000000001px;top:289px;width:1.3px;height:360px;background:#d3e2fb;"></div>
<div class="a" style="left:2191.8px;top:253px;width:1.3px;height:36px;background:#d3e2fb;"></div>
<div class="a" style="left:2186.0px;top:289px;width:1.3px;height:360px;background:#d3e2fb;"></div>
<div class="a" style="left:2513.8px;top:253px;width:1.3px;height:36px;background:#d3e2fb;"></div>
<div class="a" style="left:2506.8px;top:289px;width:1.3px;height:360px;background:#d3e2fb;"></div>
<svg class="a" style="left:369.6px;top:256.6px" width="27.4" height="26" viewBox="0 0 27.4 26"><path d="M27.4 0 V26 H0 Z" fill="#c9dcfb"/></svg>
<div class="t " style="top:263.2px;font-size:18px;left:450.2px;color:#1f1f1f;">名称</div>
<div class="t " style="top:263.2px;font-size:18px;left:876.4px;color:#1f1f1f;">数据类型</div>
<div class="t " style="top:263.2px;font-size:18px;left:1194.2px;color:#1f1f1f;">初始值</div>
<div class="t " style="top:263.2px;font-size:18px;left:1493.8px;color:#1f1f1f;">保持</div>
<div class="t " style="top:263.2px;font-size:18px;left:1564.7px;color:#1f1f1f;">显示格式</div>
<div class="t " style="top:263.2px;font-size:18px;left:1886.7px;color:#1f1f1f;">实际值</div>
<div class="t " style="top:263.2px;font-size:18px;left:2209.4px;color:#1f1f1f;">修改值</div>
<div class="t " style="top:263.2px;font-size:18px;left:2532px;color:#1f1f1f;">描述</div>
<svg class="a" style="left:420.4px;top:303.8px;color:#1f6ff0;" width="11" height="6.4"><use href="#chevb"/></svg>
<div class="t " style="top:298.61px;font-size:18px;left:447px;color:#1f6ff0;letter-spacing:-0.35px;">VAR</div>
<svg class="a" style="left:420.4px;top:519.8px;color:#1f6ff0;" width="11" height="6.4"><use href="#chevb"/></svg>
<div class="t " style="top:514.61px;font-size:18px;left:447px;color:#1f6ff0;letter-spacing:-0.35px;">TEMP</div>
<svg class="a" style="left:420.4px;top:591.8px;color:#1f6ff0;" width="11" height="6.4"><use href="#chevb"/></svg>
<div class="t " style="top:586.61px;font-size:18px;left:447px;color:#1f6ff0;letter-spacing:-0.05px;">LOCAL CONSTANT</div>
<div class="t " style="top:334.51px;font-size:18.6px;right:2265.2px;color:#262626;">1</div>
<div class="a" style="left:447px;top:340px;width:6px;height:6px;background:#8fb6f8;border-radius:3px;"></div>
<div class="t " style="top:333.87px;font-size:19.5px;left:474.4px;color:#8c8c8c;">IN1</div>
<div class="t " style="top:333.87px;font-size:19.5px;left:875.2px;color:#8c8c8c;">BOOL</div>
<div class="t " style="top:333.87px;font-size:19.5px;left:1191.6px;color:#d2d2d2;">FALSE</div>
<div class="a" style="left:1499.2px;top:334.2px;width:17.6px;height:17.6px;background:#e9e9e9;border:1px solid #dadada;border-radius:4.5px;"></div>
<div class="t " style="top:331.8px;font-size:18px;left:1564.7px;color:#333;">布尔量</div>
<svg class="a" style="left:1817px;top:333.4px" width="14.6" height="8.6" viewBox="0 0 14.6 8.6"><path d="M1 1 L7.3 7 L13.6 1" fill="none" stroke="#222" stroke-width="2"/></svg>
<div class="t " style="top:333.72px;font-size:19px;left:1882.2px;color:#333;transform-origin:0 0;transform:scaleX(0.875);">TRUE</div>
<div class="t " style="top:370.51px;font-size:18.6px;right:2265.2px;color:#262626;">2</div>
<div class="a" style="left:447px;top:376px;width:6px;height:6px;background:#8fb6f8;border-radius:3px;"></div>
<div class="t " style="top:369.87px;font-size:19.5px;left:474.4px;color:#8c8c8c;">IN2</div>
<div class="t " style="top:369.87px;font-size:19.5px;left:875.2px;color:#8c8c8c;">BOOL</div>
<div class="t " style="top:369.87px;font-size:19.5px;left:1191.6px;color:#d2d2d2;">FALSE</div>
<div class="a" style="left:1499.2px;top:370.2px;width:17.6px;height:17.6px;background:#e9e9e9;border:1px solid #dadada;border-radius:4.5px;"></div>
<div class="t " style="top:367.8px;font-size:18px;left:1564.7px;color:#333;">布尔量</div>
<svg class="a" style="left:1817px;top:369.4px" width="14.6" height="8.6" viewBox="0 0 14.6 8.6"><path d="M1 1 L7.3 7 L13.6 1" fill="none" stroke="#222" stroke-width="2"/></svg>
<div class="t " style="top:369.72px;font-size:19px;left:1882.2px;color:#333;transform-origin:0 0;transform:scaleX(0.845);">FALSE</div>
<div class="t " style="top:406.51px;font-size:18.6px;right:2265.2px;color:#262626;">3</div>
<div class="a" style="left:447px;top:412px;width:6px;height:6px;background:#8fb6f8;border-radius:3px;"></div>
<div class="t " style="top:405.87px;font-size:19.5px;left:474.4px;color:#8c8c8c;">OUT</div>
<div class="t " style="top:405.87px;font-size:19.5px;left:875.2px;color:#8c8c8c;">BOOL</div>
<div class="t " style="top:405.87px;font-size:19.5px;left:1191.6px;color:#d2d2d2;">FALSE</div>
<div class="a" style="left:1499.2px;top:406.2px;width:17.6px;height:17.6px;background:#e9e9e9;border:1px solid #dadada;border-radius:4.5px;"></div>
<div class="t " style="top:403.8px;font-size:18px;left:1564.7px;color:#333;">布尔量</div>
<svg class="a" style="left:1817px;top:405.4px" width="14.6" height="8.6" viewBox="0 0 14.6 8.6"><path d="M1 1 L7.3 7 L13.6 1" fill="none" stroke="#222" stroke-width="2"/></svg>
<div class="t " style="top:405.72px;font-size:19px;left:1882.2px;color:#333;transform-origin:0 0;transform:scaleX(0.875);">TRUE</div>
<div class="t " style="top:442.51px;font-size:18.6px;right:2265.2px;color:#262626;">4</div>
<div class="a" style="left:447px;top:448px;width:6px;height:6px;background:#8fb6f8;border-radius:3px;"></div>
<div class="t " style="top:441.87px;font-size:19.5px;left:474.4px;color:#8c8c8c;">OUT2</div>
<div class="t " style="top:441.87px;font-size:19.5px;left:875.2px;color:#8c8c8c;">BOOL</div>
<div class="t " style="top:441.87px;font-size:19.5px;left:1191.6px;color:#d2d2d2;">FALSE</div>
<div class="a" style="left:1499.2px;top:442.2px;width:17.6px;height:17.6px;background:#e9e9e9;border:1px solid #dadada;border-radius:4.5px;"></div>
<div class="t " style="top:439.8px;font-size:18px;left:1564.7px;color:#333;">布尔量</div>
<svg class="a" style="left:1817px;top:441.4px" width="14.6" height="8.6" viewBox="0 0 14.6 8.6"><path d="M1 1 L7.3 7 L13.6 1" fill="none" stroke="#222" stroke-width="2"/></svg>
<div class="t " style="top:441.72px;font-size:19px;left:1882.2px;color:#333;transform-origin:0 0;transform:scaleX(0.875);">TRUE</div>
<div class="t " style="top:478.51px;font-size:18.6px;right:2265.2px;color:#9a9a9a;">5</div>
<div class="a" style="left:447px;top:484px;width:6px;height:6px;background:#cbddfb;border-radius:3px;"></div>
<div class="t " style="top:478.59px;font-size:20.6px;left:472.8px;color:#c2c2c2;">添加</div>
<div class="t " style="top:550.51px;font-size:18.6px;right:2265.2px;color:#9a9a9a;">1</div>
<div class="a" style="left:447px;top:556px;width:6px;height:6px;background:#cbddfb;border-radius:3px;"></div>
<div class="t " style="top:550.59px;font-size:20.6px;left:472.8px;color:#c2c2c2;">添加</div>
<div class="t " style="top:622.51px;font-size:18.6px;right:2265.2px;color:#9a9a9a;">1</div>
<div class="a" style="left:447px;top:628px;width:6px;height:6px;background:#cbddfb;border-radius:3px;"></div>
<div class="t " style="top:622.59px;font-size:20.6px;left:472.8px;color:#c2c2c2;">添加</div>
<div class="a" style="left:331px;top:842px;width:2333px;height:6.2px;background:#9dc3fc;"></div>
<div class="a" style="left:333px;top:848px;width:34px;height:238px;background:#f7faff;"></div>
<div class="a" style="left:366.4px;top:848px;width:1.2px;height:238px;background:#dde7fb;"></div>
<div class="a" style="left:367.6px;top:848px;width:2297px;height:36px;background:#f6f6f6;"></div>
<div class="a" style="left:406.7px;top:850.6px;width:268.3px;height:29.4px;background:#fafafa;border-radius:4px;"></div>
<svg class="a" style="left:378px;top:862.6px;color:#333;" width="11.4" height="6.6"><use href="#chev"/></svg>
<div class="t " style="top:856.6px;font-size:18px;left:408.5px;color:#2a7afc;">程序段<span class="mono" style="font-size:17.5px;margin-left:10.5px">1</span></div>
<div class="a" style="left:333px;top:1085.4px;width:2331px;height:1.5px;background:#dcdcdc;"></div>
<div class="t mono" style="top:959.45px;font-size:17.5px;left:344px;color:#111;font-weight:bold;">1</div>
<svg class="a" style="left:0;top:0" width="2664" height="2034" viewBox="0 0 2664 2034">
<g fill="none" stroke="#33cc99" stroke-width="2">
<path d="M442 913 V1057.6"/>
<path d="M442 990 H568 M568 977 V1003.6 M592.4 977 V1003.6 M592.4 990 H1004"/>
<path d="M1125 990 H1279 M1313 990 H1432.4 M1432.4 980.6 V999.4"/>
<path d="M1285 976.6 Q1273 990.4 1285 1004.2 M1307 976.6 Q1319 990.4 1307 1004.2"/>
</g>
<rect x="1005" y="948.6" width="119" height="107.4" fill="#f5f8ff"/>
<rect x="1005" y="948.6" width="119" height="23" fill="#dde9fd"/>
<rect x="1005" y="948.6" width="119" height="107.4" fill="none" stroke="#33cc99" stroke-width="2"/>
<path d="M965.4 1035.6 H1003" stroke="#bdbdbd" stroke-width="1.6"/>
</svg>
<div class="a" style="left:538.2px;top:920.3px;width:84.3px;height:23.5px;background:#e9f5ee;"></div>
<div class="a" style="left:1254px;top:920.3px;width:83.7px;height:23.5px;background:#e9f5ee;"></div>
<div class="a" style="left:877px;top:1002px;width:83.8px;height:24px;background:#e4ecfd;"></div>
<div class="t mono" style="left:559.13px;top:923.69px;font-size:17.5px;color:#3cc474;">TRUE</div>
<div class="t mono" style="left:564.2px;top:947.29px;font-size:17.5px;color:#161616;">IN1</div>
<div class="t mono" style="left:1274.53px;top:923.69px;font-size:17.5px;color:#3cc474;">TRUE</div>
<div class="t mono" style="left:1274.53px;top:947.29px;font-size:17.5px;color:#161616;">OUT2</div>
<div class="t mono" style="left:1043.43px;top:917.29px;font-size:17.5px;color:#161616;">SR_2</div>
<div class="t mono" style="left:1053.96px;top:951.69px;font-size:17.5px;color:#161616;">SR</div>
<div class="t mono" style="left:1009.2px;top:981.09px;font-size:17.5px;color:#161616;">S1</div>
<div class="t mono" style="left:1098.33px;top:981.09px;font-size:17.5px;color:#161616;">Q1</div>
<div class="t mono" style="left:1009.2px;top:1030.29px;font-size:17.5px;color:#161616;">R</div>
<div class="t mono" style="left:896.06px;top:1006.89px;font-size:17.5px;color:#1f1f1f;">FALSE</div>
<div class="t mono" style="left:929.39px;top:1029.69px;font-size:17.5px;color:#161616;">IN2</div>
<div class="a" style="left:333px;top:1395px;width:2331px;height:41px;background:#fafafa;"></div>
<svg class="a" style="left:349px;top:1410.2px" width="15.4" height="10.4" viewBox="0 0 15.4 10.4"><path d="M7.7 0 L15.4 10.4 H0 Z" fill="#2a7afc"/></svg>
<div class="t " style="top:1405.61px;font-size:18px;left:390px;color:#111;">CYCLE_1</div>
<svg class="a" style="left:492px;top:1408px" width="9.4" height="14.4" viewBox="0 0 9.4 14.4"><path d="M1 1 L8 7.2 L1 13.4" fill="none" stroke="#c4c4c4" stroke-width="1.6"/></svg>
<div class="t " style="top:1405.61px;font-size:18px;left:524.2px;color:#2a7afc;">PU_1</div>
<div class="a" style="left:333px;top:1436px;width:2331px;height:3px;background:#aecbfa;"></div>
<div class="a" style="left:333px;top:1436px;width:99px;height:3px;background:#3b82f6;"></div>
<div class="a" style="left:333px;top:1439px;width:2331px;height:40px;background:#dce9fd;"></div>
<div class="a" style="left:333px;top:1439px;width:99px;height:40px;background:#f7faff;"></div>
<svg class="a" style="left:343px;top:1445px;" width="24" height="24"><use href="#infoo"/></svg>
<div class="t " style="top:1447.8px;font-size:18px;left:377.8px;color:#2a7afc;">信息</div>
<svg class="a" style="left:443.4px;top:1446.4px;" width="24" height="22"><use href="#prop"/></svg>
<div class="t " style="top:1447.8px;font-size:18px;left:477.6px;color:#6a6a6a;">属性</div>
<div class="a" style="left:333px;top:1479px;width:2331px;height:520px;background:#f7faff;"></div>
<div class="t " style="top:1506.2px;font-size:18px;left:418.3px;color:#6f6f6f;">常规</div>
<div class="t " style="top:1506.2px;font-size:18px;left:568.4px;color:#2a7afc;">下载</div>
<div class="t " style="top:1506.2px;font-size:18px;left:718px;color:#6f6f6f;">编译</div>
<div class="a" style="left:364px;top:1534.6px;width:2300px;height:1.2px;background:#8fb6f8;"></div>
<div class="a" style="left:514px;top:1533px;width:150px;height:2.8px;background:#2a7afc;"></div>
<div class="a" style="left:364px;top:1572px;width:2300px;height:411px;overflow:hidden">
<div class="a" style="left:0;top:0px;width:2300px;height:36px;background:#ffffff"></div>
<div class="a" style="left:0;top:36px;width:2300px;height:36px;background:#fafafa"></div>
<div class="a" style="left:0;top:72px;width:2300px;height:36px;background:#ffffff"></div>
<div class="a" style="left:0;top:108px;width:2300px;height:36px;background:#fafafa"></div>
<div class="a" style="left:0;top:144px;width:2300px;height:36px;background:#ffffff"></div>
<div class="a" style="left:0;top:180px;width:2300px;height:36px;background:#fafafa"></div>
<div class="a" style="left:0;top:216px;width:2300px;height:36px;background:#ffffff"></div>
<div class="a" style="left:0;top:252px;width:2300px;height:36px;background:#fafafa"></div>
<div class="a" style="left:0;top:288px;width:2300px;height:36px;background:#ffffff"></div>
<div class="a" style="left:0;top:324px;width:2300px;height:36px;background:#fafafa"></div>
<div class="a" style="left:0;top:360px;width:2300px;height:36px;background:#ffffff"></div>
<div class="a" style="left:0;top:396px;width:2300px;height:36px;background:#fafafa"></div>
</div>
<div class="a" style="left:364px;top:1536px;width:2300px;height:36px;background:#f3f3f3;box-shadow:0 3px 8px rgba(0,0,0,0.16);"></div>
<div class="a" style="left:614px;top:1545px;width:1.5px;height:18.5px;background:#c6c6c6;"></div>
<div class="a" style="left:2490px;top:1545px;width:1.5px;height:18.5px;background:#c6c6c6;"></div>
<div class="t " style="top:1547.0px;font-size:18px;left:627.7px;color:#161616;">路径</div>
<div class="t " style="top:1547.0px;font-size:18px;left:2504px;color:#161616;">时间</div>
<div class="a" style="left:333px;top:1572px;width:2331px;height:411px;overflow:hidden">
<svg class="a" style="left:140.0px;top:9px;" width="18.4" height="18.4"><use href="#infos"/></svg>
<svg class="a" style="left:298px;top:13.6px;color:#1f6ff0;" width="11.4" height="6.6"><use href="#chevb"/></svg>
<div class="t " style="top:8.01px;font-size:18px;left:322px;color:#2a7afc;">PLC_1</div>
<svg class="a" style="left:140.0px;top:45px;" width="18.4" height="18.4"><use href="#infos"/></svg>
<svg class="a" style="left:325.1px;top:49.6px;color:#1f6ff0;" width="11.4" height="6.6"><use href="#chevb"/></svg>
<div class="t " style="top:45.8px;font-size:18px;left:349.20000000000005px;color:#2a7afc;">软件</div>
<svg class="a" style="left:140.0px;top:81px;" width="18.4" height="18.4"><use href="#infos"/></svg>
<div class="t " style="top:81.8px;font-size:18px;left:376px;color:#2a7afc;">全局变量集合GVS</div>
<svg class="a" style="left:140.0px;top:117px;" width="18.4" height="18.4"><use href="#infos"/></svg>
<svg class="a" style="left:352.20000000000005px;top:121.6px;color:#1f6ff0;" width="11.4" height="6.6"><use href="#chevb"/></svg>
<div class="t " style="top:117.8px;font-size:18px;left:376px;color:#2a7afc;">程序单元</div>
<svg class="a" style="left:140.0px;top:153px;" width="18.4" height="18.4"><use href="#infos"/></svg>
<div class="t " style="top:153.8px;font-size:18px;left:403px;color:#222;">STD.PU_1删除成功</div>
<div class="t " style="top:152.61px;font-size:18px;left:2171.6px;color:#222;">10:50:46 AM</div>
<svg class="a" style="left:140.0px;top:189px;" width="18.4" height="18.4"><use href="#infos"/></svg>
<div class="t " style="top:189.8px;font-size:18px;left:403px;color:#222;">STD.PU_1下载成功</div>
<div class="t " style="top:188.61px;font-size:18px;left:2171.6px;color:#222;">10:50:46 AM</div>
<svg class="a" style="left:140.0px;top:225px;" width="18.4" height="18.4"><use href="#infos"/></svg>
<div class="t " style="top:225.8px;font-size:18px;left:403px;color:#222;">单独下载STD.PU_1成功</div>
<div class="t " style="top:224.61px;font-size:18px;left:2171.6px;color:#222;">10:50:46 AM</div>
<svg class="a" style="left:140.0px;top:261px;" width="18.4" height="18.4"><use href="#infos"/></svg>
<div class="t " style="top:261.8px;font-size:18px;left:376px;color:#2a7afc;">任务</div>
<svg class="a" style="left:140.0px;top:297px;" width="18.4" height="18.4"><use href="#infos"/></svg>
<div class="t " style="top:297.8px;font-size:18px;left:376px;color:#2a7afc;">IO映射变量</div>
<svg class="a" style="left:140.0px;top:333px;" width="18.4" height="18.4"><use href="#infos"/></svg>
<div class="t " style="top:333.8px;font-size:18px;left:376px;color:#2a7afc;">用户数据类型</div>
<svg class="a" style="left:140.0px;top:369px;" width="18.4" height="18.4"><use href="#infos"/></svg>
<div class="t " style="top:369.8px;font-size:18px;left:376px;color:#2a7afc;">工艺控制</div>
<svg class="a" style="left:140.0px;top:405px;" width="18.4" height="18.4"><use href="#infos"/></svg>
<div class="t " style="top:405.8px;font-size:18px;left:376px;color:#2a7afc;">库创建管理</div>
</div>
<div class="a" style="left:0px;top:1999px;width:2664px;height:33px;background:#007acc;"></div>
<div class="a" style="left:0px;top:2032px;width:2664px;height:2px;background:#e6e6e6;"></div>
<div class="a" style="left:2663px;top:54px;width:1px;height:1945px;background:#e9e9e9;"></div>
<svg class="a" style="left:2586px;top:2020px" width="18" height="14" viewBox="0 0 18 14"><path d="M2.4 2 V16 L15 15 Z" fill="#fff" stroke="#111" stroke-width="1.2"/></svg>
<div class="t " style="top:2009.2px;font-size:18px;left:-9.5px;color:#fff;">言服务空闲</div>
<svg class="a" style="left:99.6px;top:2008.4px" width="18.6" height="18.6" viewBox="0 0 18.6 18.6"><circle cx="9.3" cy="9.3" r="8.3" fill="none" stroke="#fff" stroke-width="1.5"/><path d="M5.8 5.8 L12.8 12.8 M12.8 5.8 L5.8 12.8" stroke="#fff" stroke-width="1.5"/></svg>
<div class="t " style="top:2008.61px;font-size:18px;left:124.6px;color:#fff;">0</div>
<svg class="a" style="left:140px;top:2008.6px" width="18.4" height="17.4" viewBox="0 0 18.4 17.4"><path d="M9.2 1.4 L17.4 16.4 H1 Z" fill="none" stroke="#fff" stroke-width="1.5" stroke-linejoin="round"/><path d="M9.2 6.4 V11.6 M9.2 13 V14.8" stroke="#fff" stroke-width="1.5"/></svg>
<div class="t " style="top:2008.61px;font-size:18px;left:164.8px;color:#fff;">0</div>
<div class="t " style="top:2008.61px;font-size:18px;left:191.8px;color:#fff;letter-spacing:-0.1px;">ClientID-22a2c68f-49ae-49e9-9ba3-1bdeec862371</div></body></html>
